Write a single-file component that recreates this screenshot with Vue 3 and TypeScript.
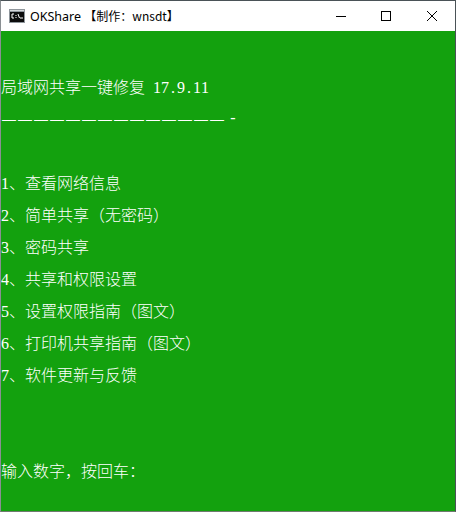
<script setup lang="ts">
// console output, one entry per row; blank rows keep their height
const rows: string[] = [
  '',
  '局域网共享一键修复 17.9.11',
  '——————————————-',
  '',
  '1、查看网络信息',
  '2、简单共享（无密码）',
  '3、密码共享',
  '4、共享和权限设置',
  '5、设置权限指南（图文）',
  '6、打印机共享指南（图文）',
  '7、软件更新与反馈',
  '',
  '',
  '输入数字，按回车：'
]

// ascii takes half of a CJK cell, dashes leave a gap between cells
function split(row: string): string[] {
  return row.match(/—+|[\x20-\x7e]|[^\x20-\x7e—]+/g) ?? []
}

function partClass(part: string): string {
  if (part[0] === '—') return 'rule'
  if (part === '-') return 'ascii tick'
  return /^[\x20-\x7e]$/.test(part) ? 'ascii' : 'cjk'
}
</script>

<template>
  <div class="window">
    <header class="titlebar">
      <svg class="app-icon" width="16" height="16" viewBox="0 0 16 16">
        <rect x="0" y="1" width="16" height="14" fill="#8f969c" />
        <rect x="1" y="2" width="14" height="1" fill="#d5d8db" />
        <rect x="1" y="4" width="14" height="10" fill="#0c0c0c" />
        <path d="M5 6H3v4h2M7 7v1M7 9v1M9 6l1.500 4M11 10h3" fill="none" stroke="#fff" stroke-width="1" />
      </svg>
      <span class="title">OKShare <span class="title-cjk">【制作：wnsdt】</span></span>
      <div class="controls">
        <button class="control control-min">
          <svg width="10" height="10" viewBox="0 0 10 10"><path d="M0 5.500H10" stroke="#000" fill="none" /></svg>
        </button>
        <button class="control">
          <svg width="10" height="10" viewBox="0 0 10 10"><rect x="0.500" y="0.500" width="9" height="9" stroke="#000" fill="none" /></svg>
        </button>
        <button class="control">
          <svg width="10" height="10" viewBox="0 0 10 10"><path d="M0 0L10 10M10 0L0 10" stroke="#000" stroke-width="1" fill="none" /></svg>
        </button>
      </div>
    </header>
    <main class="console">
      <div v-for="(row, i) in rows" :key="i" class="row">
        <span
          v-for="(part, j) in split(row)"
          :key="j"
          :class="partClass(part)"
        >{{ part }}</span>
      </div>
    </main>
  </div>
</template>

<style scoped>
.window {
  display: flex;
  flex-direction: column;
  width: 456px;
  height: 512px;
  box-sizing: border-box;
  border-top: 1px solid #4a5257;
  border-left: 1px solid #8a8f93;
  border-right: 1px solid #4a5257;
  border-bottom: 1px solid #6f7a6f;
  overflow: hidden;
  background: #13a10e;
}

.titlebar {
  display: flex;
  align-items: center;
  flex: none;
  height: 30px;
  padding-left: 8px;
  background: #fff;
}

.app-icon {
  flex: none;
  margin-right: 5px;
}

.title {
  font-family: "Noto Sans", "Noto Sans CJK SC", sans-serif;
  font-size: 12.500px;
  color: #000;
  white-space: pre;
}

.title-cjk {
  font-family: "Noto Sans CJK SC", sans-serif;
  font-size: 12px;
}

.controls {
  display: flex;
  margin-left: auto;
  height: 100%;
}

.control {
  display: flex;
  align-items: center;
  justify-content: center;
  width: 46px;
  padding: 0;
  border: 0;
  background: transparent;
}

.control-min {
  padding-left: 2px;
}

.console {
  flex: 1;
  padding-top: 7px;
  color: #fff;
}

.row {
  height: 32px;
  line-height: 32px;
  white-space: pre;
}

.cjk {
  font-family: "Noto Sans CJK SC", sans-serif;
  font-size: 16px;
  font-weight: 300;
}

.ascii {
  display: inline-block;
  width: 8px;
  text-align: center;
  font-family: "Liberation Serif", serif;
  font-size: 16px;
}

.rule {
  font-family: "Liberation Sans", sans-serif;
  font-size: 14px;
  letter-spacing: 2px;
  padding-left: 1px;
  margin-right: -1px;
}

.tick {
  margin-left: 4px;
  vertical-align: 1px;
}
</style>
